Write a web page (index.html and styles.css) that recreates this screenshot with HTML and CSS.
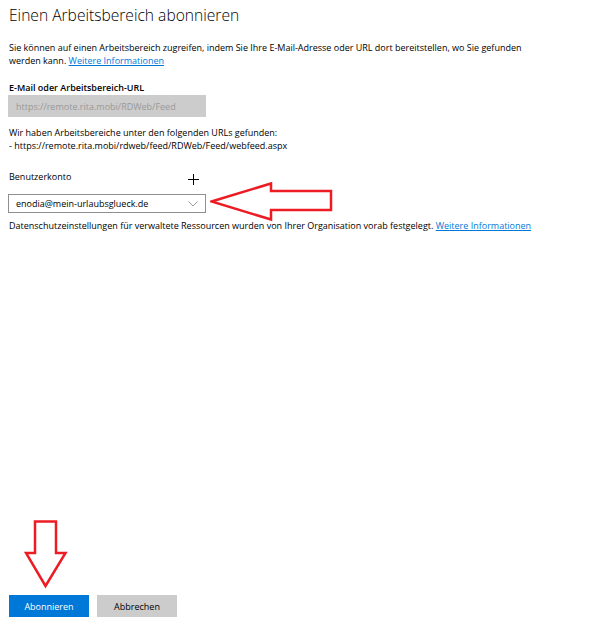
FILE: index.html
```html
<!DOCTYPE html>
<html lang="de">

<head>
    <meta charset="UTF-8">
    <title>Einen Arbeitsbereich abonnieren</title>
    <link rel="stylesheet" href="styles.css">
</head>

<body>
    <div class="page">
        <h1 class="title">Einen Arbeitsbereich abonnieren</h1>

        <p class="intro">Sie können auf einen Arbeitsbereich zugreifen, indem Sie Ihre E-Mail-Adresse oder URL dort bereitstellen, wo Sie gefunden<br>werden kann. <a href="#" class="link">Weitere Informationen</a></p>

        <label class="field-label" for="feed-url">E-Mail oder Arbeitsbereich-URL</label>
        <input id="feed-url" class="text-input" type="text" value="https://remote.rita.mobi/RDWeb/Feed" disabled>

        <p class="found">
            Wir haben Arbeitsbereiche unter den folgenden URLs gefunden:<br>
            - https://remote.rita.mobi/rdweb/feed/RDWeb/Feed/webfeed.aspx
        </p>

        <div class="account-head">
            <span class="account-label">Benutzerkonto</span>
            <span class="add-btn">
                <svg width="11" height="11" viewBox="0 0 11 11">
                    <path d="M5.5 0v11M0 5.5h11" stroke="#000" stroke-width="1" fill="none"/>
                </svg>
            </span>
        </div>

        <div class="select">
            <span>enodia@mein-urlaubsglueck.de</span>
            <svg class="chevron" width="10" height="6" viewBox="0 0 10 6">
                <path d="M0.5 0.5l4.5 4.5l4.5-4.5" stroke="#999" stroke-width="1" fill="none"/>
            </svg>
        </div>

        <p class="privacy">Datenschutzeinstellungen für verwaltete Ressourcen wurden von Ihrer Organisation vorab festgelegt. <a href="#" class="link">Weitere Informationen</a></p>

        <div class="actions">
            <button class="btn btn-primary">Abonnieren</button>
            <button class="btn btn-secondary">Abbrechen</button>
        </div>

        <!-- annotation arrows -->
        <svg class="arrow arrow-left" width="124" height="42" viewBox="0 0 124 42">
            <path d="M1.5 20.5L61 2.5V10H121V29H61V38.5Z" fill="none" stroke="#ed1c24" stroke-width="2.5" stroke-linejoin="miter"/>
        </svg>
        <svg class="arrow arrow-down" width="46" height="70" viewBox="0 0 46 70">
            <path d="M11 1.5H32V33H41.5L21.5 66L2 33H11Z" fill="none" stroke="#ed1c24" stroke-width="2.5" stroke-linejoin="miter"/>
        </svg>
    </div>
</body>

</html>
```

FILE: styles.css
```css
* {
    box-sizing: border-box;
}

body {
    margin: 0;
    background: #fff;
    color: #000;
    font-family: "Open Sans", "Noto Sans", sans-serif;
    font-size: 9px;
}

.page {
    position: relative;
    height: 632px;
    padding: 0 9px;
    display: flex;
    flex-direction: column;
    align-items: flex-start;
}

.title {
    margin: 3px 0 0;
    font-size: 15.6px;
    font-weight: 300;
    line-height: 24px;
}

.intro {
    margin: 14px 0 0;
    line-height: 13px;
}

.link {
    color: #0078d7;
    text-decoration: underline;
}

.field-label {
    margin-top: 14px;
    font-weight: 600;
    line-height: 13px;
}

.text-input {
    margin: 1px 0 0 -1px;
    width: 198px;
    height: 22px;
    border: none;
    background: #cccccc;
    color: #999;
    font-family: inherit;
    font-size: 9px;
    padding: 0 8px;
}

.found {
    margin: 9px 0 0;
    line-height: 13px;
}

.account-head {
    margin-top: 18px;
    width: 190px;
    display: flex;
    justify-content: space-between;
    align-items: flex-start;
    line-height: 13px;
}

.add-btn {
    margin-top: 4px;
    display: flex;
}

.select {
    margin: 9px 0 0 -1px;
    width: 198px;
    height: 19px;
    border: 1px solid #8f8f8f;
    display: flex;
    align-items: center;
    justify-content: space-between;
    padding: 0 6px 0 7px;
}

.chevron {
    margin-right: 1px;
}

.privacy {
    margin: 6px 0 0;
    line-height: 13px;
}

.actions {
    margin-top: auto;
    margin-bottom: 15px;
    display: flex;
    gap: 8px;
}

.btn {
    width: 80px;
    height: 22px;
    border: none;
    font-family: inherit;
    font-size: 9px;
    padding: 0;
}

.btn-primary {
    background: #0078d7;
    color: #fff;
}

.btn-secondary {
    background: #cccccc;
    color: #000;
}

.arrow {
    position: absolute;
}

.arrow-left {
    left: 210px;
    top: 181px;
}

.arrow-down {
    left: 24px;
    top: 520px;
}
```
